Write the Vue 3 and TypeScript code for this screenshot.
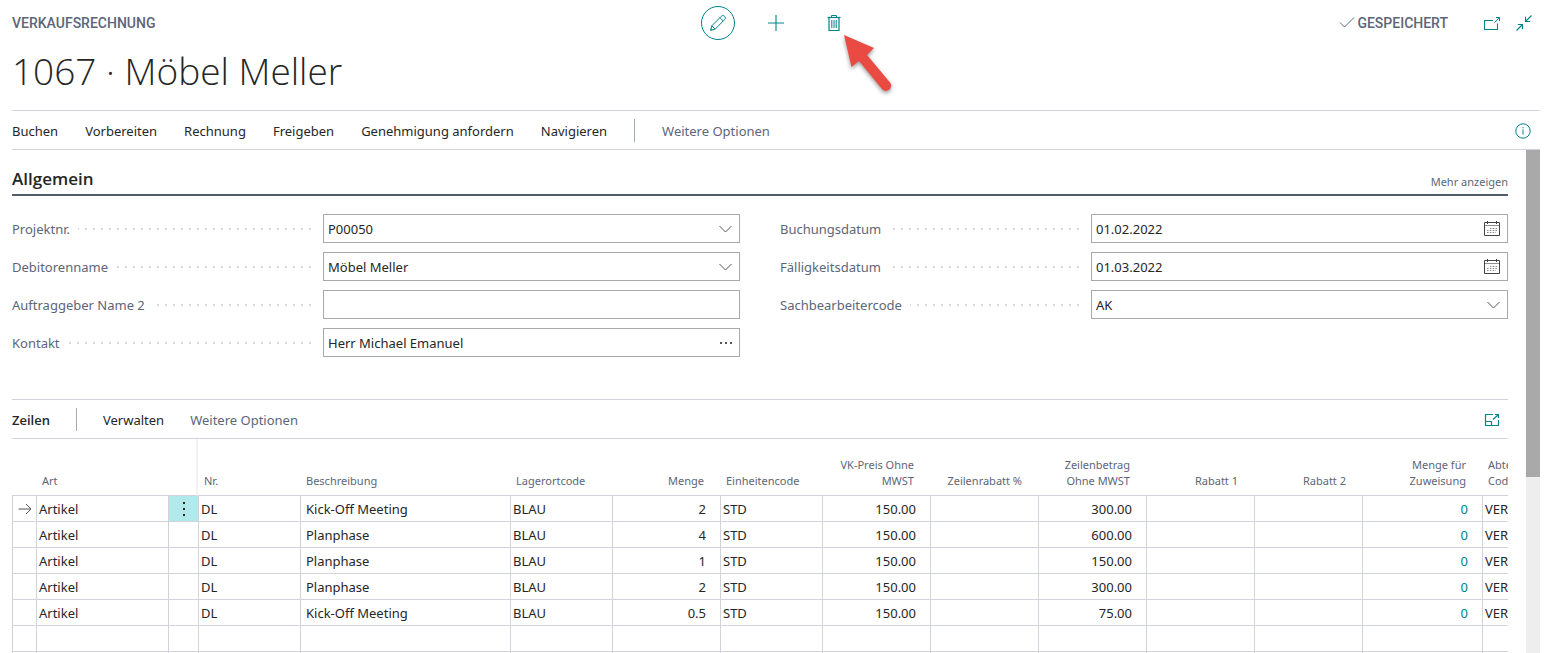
<script setup lang="ts">
interface Field {
  id: string
  label: string
  value: string
  kind: 'select' | 'text' | 'assist' | 'date'
}

interface Column {
  key: string
  label: string
  width: number
  numeric?: boolean
}

interface Line {
  art: string
  nr: string
  text: string
  location: string
  qty: string
  unit: string
  price: string
  amount: string
  assign: string
  dept: string
}

const menu: string[] = ['Buchen', 'Vorbereiten', 'Rechnung', 'Freigeben', 'Genehmigung anfordern', 'Navigieren']

const fieldColumns: Field[][] = [
  [
    { id: 'projekt', label: 'Projektnr.', value: 'P00050', kind: 'select' },
    { id: 'debitor', label: 'Debitorenname', value: 'Möbel Meller', kind: 'select' },
    { id: 'name2', label: 'Auftraggeber Name 2', value: '', kind: 'text' },
    { id: 'kontakt', label: 'Kontakt', value: 'Herr Michael Emanuel', kind: 'assist' },
  ],
  [
    { id: 'buchung', label: 'Buchungsdatum', value: '01.02.2022', kind: 'date' },
    { id: 'faellig', label: 'Fälligkeitsdatum', value: '01.03.2022', kind: 'date' },
    { id: 'bearbeiter', label: 'Sachbearbeitercode', value: 'AK', kind: 'select' },
  ],
]

const columns: Column[] = [
  { key: 'marker', label: '', width: 24 },
  { key: 'art', label: 'Art', width: 132 },
  { key: 'menu', label: '', width: 30 },
  { key: 'nr', label: 'Nr.', width: 102 },
  { key: 'text', label: 'Beschreibung', width: 210 },
  { key: 'location', label: 'Lagerortcode', width: 102 },
  { key: 'qty', label: 'Menge', width: 108, numeric: true },
  { key: 'unit', label: 'Einheitencode', width: 102 },
  { key: 'price', label: 'VK-Preis Ohne\nMWST', width: 108, numeric: true },
  { key: 'discount', label: 'Zeilenrabatt %', width: 108, numeric: true },
  { key: 'amount', label: 'Zeilenbetrag\nOhne MWST', width: 108, numeric: true },
  { key: 'rabatt1', label: 'Rabatt 1', width: 108, numeric: true },
  { key: 'rabatt2', label: 'Rabatt 2', width: 108, numeric: true },
  { key: 'assign', label: 'Menge für\nZuweisung', width: 120, numeric: true },
  { key: 'dept', label: 'Abteilung\nCode', width: 102 },
]

const tableWidth: number = columns.reduce((sum, c) => sum + c.width, 0)

const makeLine = (text: string, qty: string, amount: string): Line => ({
  art: 'Artikel',
  nr: 'DL',
  text,
  location: 'BLAU',
  qty,
  unit: 'STD',
  price: '150.00',
  amount,
  assign: '0',
  dept: 'VERK',
})

const lines: (Line | null)[] = [
  makeLine('Kick-Off Meeting', '2', '300.00'),
  makeLine('Planphase', '4', '600.00'),
  makeLine('Planphase', '1', '150.00'),
  makeLine('Planphase', '2', '300.00'),
  makeLine('Kick-Off Meeting', '0.5', '75.00'),
  null,
  null,
]

const cell = (line: Line | null, key: string): string =>
  line ? ((line as unknown as Record<string, string>)[key] ?? '') : ''
</script>

<template>
  <div class="page">
    <header class="top">
      <div class="caption">VERKAUFSRECHNUNG</div>
      <div class="actions">
        <button class="icon-btn round" type="button" aria-label="Bearbeiten">
          <svg width="18" height="18" viewBox="0 0 18 18" fill="none" stroke="currentColor">
            <path d="M1.500 16.500 L2.800 11.800 L12.300 2.300 C13.300 1.300 14.600 1.300 15.600 2.300 C16.600 3.300 16.600 4.600 15.600 5.600 L6.200 15.100 Z" />
            <path d="M2.800 11.800 L6.200 15.100 M11 3.700 L14.300 7 M2 14.600 L3.400 16" />
          </svg>
        </button>
        <button class="icon-btn" type="button" aria-label="Neu">
          <svg width="16" height="16" viewBox="0 0 16 16" fill="none" stroke="currentColor" stroke-width="1.100">
            <path d="M8 0 V16 M0 8 H16" />
          </svg>
        </button>
        <div class="delete">
          <button class="icon-btn" type="button" aria-label="Löschen">
            <svg width="14" height="16" viewBox="0 0 14 16" fill="none" stroke="currentColor">
              <path d="M0.500 2.500 H13.500" stroke-width="1.200" />
              <path d="M4.500 2.500 V0.500 H9.500 V2.500" />
              <path d="M2 2.500 V15.500 H12 V2.500" stroke-width="1.200" />
              <path d="M4.800 5 V13 M7 5 V13 M9.200 5 V13" />
            </svg>
          </button>
          <svg class="pointer" width="60" height="70" viewBox="0 0 60 70" aria-hidden="true">
            <path d="M4 5 L34 18 L27 25 L50 52.500 A5 5 0 0 1 42 59 L19 31 L11.500 37 Z" fill="#e94b43" />
          </svg>
        </div>
      </div>
      <div class="status">
        <span class="saved">
          <svg width="16" height="12" viewBox="0 0 16 12" fill="none" stroke="currentColor">
            <path d="M1 5.500 L5.500 10 L15 0.500" />
          </svg>
          GESPEICHERT
        </span>
        <button class="icon-btn small" type="button" aria-label="In neuem Fenster öffnen">
          <svg width="16" height="13" viewBox="0 0 16 13" fill="none" stroke="currentColor">
            <path d="M9 3.500 H0.500 V12.500 H13.500 V6.500" stroke-width="1.100" />
            <path d="M10.500 5.500 L15.500 0.700 M12 0.500 H15.500 V4.200" />
          </svg>
        </button>
        <button class="icon-btn small" type="button" aria-label="Verkleinern">
          <svg width="16" height="16" viewBox="0 0 16 16" fill="none" stroke="currentColor" stroke-width="1.100">
            <path d="M15.500 0.500 L9.500 6.500 M9.500 1.800 V6.500 H14.200" />
            <path d="M0.500 15.500 L6.500 9.500 M1.800 9.500 H6.500 V14.200" />
          </svg>
        </button>
      </div>
    </header>

    <h1 class="title">1067 · Möbel Meller</h1>

    <nav class="bar">
      <button v-for="item in menu" :key="item" class="link" type="button">{{ item }}</button>
      <span class="divider"></span>
      <button class="link muted" type="button">Weitere Optionen</button>
      <button class="icon-btn small info" type="button" aria-label="Infobox">
        <svg width="16" height="16" viewBox="0 0 16 16" fill="none" stroke="currentColor">
          <circle cx="8" cy="8" r="7.200" />
          <path d="M8 6.500 V11.500 M8 4.200 V5.400" />
        </svg>
      </button>
    </nav>

    <div class="body">
      <main class="content">
        <section>
          <div class="section-head">
            <h2>Allgemein</h2>
            <button class="more" type="button">Mehr anzeigen</button>
          </div>
          <div class="form">
            <div v-for="(column, i) in fieldColumns" :key="i" class="form-col">
              <div v-for="f in column" :key="f.id" class="field">
                <div class="label-cell">
                  <label :for="f.id">{{ f.label }}</label>
                  <span class="dots"></span>
                </div>
                <div class="control">
                  <template v-if="f.kind === 'select'">
                    <select :id="f.id">
                      <option>{{ f.value }}</option>
                    </select>
                    <svg class="chevron" width="13" height="8" viewBox="0 0 13 8" fill="none" stroke="currentColor">
                      <path d="M0.500 1 L6.500 7 L12.500 1" />
                    </svg>
                  </template>
                  <template v-else>
                    <input :id="f.id" type="text" :value="f.value" />
                    <button v-if="f.kind === 'assist'" class="assist" type="button" aria-label="Auswählen">
                      <svg width="12" height="2" viewBox="0 0 12 2" fill="#555">
                        <path d="M0 0 H2 V2 H0 Z M5 0 H7 V2 H5 Z M10 0 H12 V2 H10 Z" />
                      </svg>
                    </button>
                    <button v-if="f.kind === 'date'" class="assist" type="button" aria-label="Datum auswählen">
                      <svg width="16" height="15" viewBox="0 0 16 15" fill="none" stroke="#444">
                        <path d="M0.500 1.500 H15.500 V14.500 H0.500 Z" />
                        <path d="M3.500 0 V3 M12.500 0 V3" />
                        <path d="M1 4.500 H15" stroke="#8c8c8c" />
                        <path d="M6 7.500 H14 M3 9.500 H14 M3 11.500 H12" stroke="#888" stroke-dasharray="1.500 1.300" />
                      </svg>
                    </button>
                  </template>
                </div>
              </div>
            </div>
          </div>
        </section>

        <section class="lines">
          <div class="bar lines-bar">
            <h3>Zeilen</h3>
            <span class="divider"></span>
            <button class="link" type="button">Verwalten</button>
            <button class="link muted" type="button">Weitere Optionen</button>
            <button class="icon-btn small expand" type="button" aria-label="Fokusmodus">
              <svg width="16" height="14" viewBox="0 0 16 14" fill="none" stroke="currentColor" stroke-width="1.200">
                <path d="M9 1.500 H1.500 V12.500 H14.500 V7 M1.500 8.500 H7.500 V12.500" />
                <path d="M9 6.500 L14 2 M11 1.500 H14.500 V5" />
              </svg>
            </button>
          </div>
          <div class="grid">
            <table :style="{ width: tableWidth + 'px' }">
              <colgroup>
                <col v-for="c in columns" :key="c.key" :style="{ width: c.width + 'px' }" />
              </colgroup>
              <thead>
                <tr>
                  <th v-for="c in columns" :key="c.key" scope="col" :class="[c.key, { num: c.numeric }]">{{ c.label }}</th>
                </tr>
              </thead>
              <tbody>
                <tr v-for="(line, r) in lines" :key="r">
                  <td v-for="c in columns" :key="c.key" :class="[c.key, { num: c.numeric, active: r === 0 }]">
                    <svg v-if="c.key === 'marker' && r === 0" width="14" height="12" viewBox="0 0 14 12" fill="none" stroke="#555">
                      <path d="M0.500 6 H13 M8 1 L13 6 L8 11" />
                    </svg>
                    <button v-else-if="c.key === 'menu' && r === 0" class="row-menu" type="button" aria-label="Weitere Optionen anzeigen">
                      <svg width="2" height="14" viewBox="0 0 2 14" fill="currentColor">
                        <path d="M0 0 H2 V2 H0 Z M0 6 H2 V8 H0 Z M0 12 H2 V14 H0 Z" />
                      </svg>
                    </button>
                    <a v-else-if="c.key === 'assign' && line" href="#">{{ line.assign }}</a>
                    <template v-else>{{ cell(line, c.key) }}</template>
                  </td>
                </tr>
              </tbody>
            </table>
          </div>
        </section>
      </main>
      <div class="scroll-track"><div class="scroll-thumb"></div></div>
    </div>
  </div>
</template>

<style>
body {
  background: #fff;
}
</style>

<style scoped>
.page {
  box-sizing: border-box;
  height: 100vh;
  padding: 6px 5px 0 12px;
  display: flex;
  flex-direction: column;
  overflow: hidden;
  color: #262626;
  font: 13px/20px "Noto Sans", "Open Sans", sans-serif;
}
button {
  padding: 0;
  border: 0;
  background: none;
  color: inherit;
  font: inherit;
  white-space: nowrap;
}
svg {
  display: block;
}
.top {
  display: grid;
  grid-template-columns: 1fr auto 1fr;
  align-items: center;
}
.caption,
.saved {
  color: #5c6678;
  font: 500 14px/20px Roboto, sans-serif;
}
.actions {
  display: flex;
  gap: 24px;
}
.icon-btn {
  display: flex;
  align-items: center;
  justify-content: center;
  box-sizing: border-box;
  width: 34px;
  height: 34px;
  color: #00838a;
}
.round {
  border: 1px solid #00838a;
  border-radius: 50%;
}
.small {
  width: 16px;
  height: 20px;
}
.delete {
  position: relative;
}
.pointer {
  position: absolute;
  left: 23px;
  top: 24px;
  filter: drop-shadow(0 2px 2px rgba(0, 0, 0, 0.4));
}
.status {
  display: flex;
  justify-content: flex-end;
  align-items: center;
  gap: 16px;
  padding-right: 8px;
}
.saved {
  display: flex;
  align-items: center;
  gap: 2px;
  margin-right: 20px;
}
.title {
  margin: 5px 0 13px;
  font-family: "Open Sans", "Noto Sans", sans-serif;
  font-size: 37px;
  font-weight: 300;
  line-height: 52px;
}
.bar {
  display: flex;
  align-items: center;
  gap: 27px;
  box-sizing: border-box;
  height: 40px;
  flex: none;
  padding-top: 1px;
  border-top: 1px solid #d0d3d9;
  border-bottom: 1px solid #d0d3d9;
}
.lines-bar {
  gap: 26px;
}
.muted {
  color: #5c6678;
}
.divider {
  width: 1px;
  height: 23px;
  background: #a3abb9;
}
.info {
  margin: 0 9px 0 auto;
}
.body {
  display: flex;
  flex: 1;
  gap: 18px;
  min-height: 0;
}
.content {
  flex: 1;
  min-width: 0;
  overflow: hidden;
}
.scroll-track {
  width: 14px;
  background: #eee;
}
.scroll-thumb {
  height: 65%;
  background: #a9a9a9;
}
.section-head {
  display: flex;
  justify-content: space-between;
  align-items: flex-end;
  height: 44px;
  border-bottom: 2px solid #505c6d;
}
h2 {
  margin: 0 0 2px;
  font-family: "Open Sans", "Noto Sans", sans-serif;
  font-size: 17px;
  font-weight: 600;
  line-height: 26px;
}
.more {
  color: #5c6678;
  font-size: 11px;
  line-height: 16px;
  margin-bottom: 4px;
}
.form {
  display: grid;
  grid-template-columns: 1fr 1fr;
  gap: 40px;
  padding: 18px 0 42px;
}
.form-col {
  display: flex;
  flex-direction: column;
  gap: 9px;
}
.field {
  display: grid;
  grid-template-columns: 311fr 417fr;
  align-items: center;
}
.label-cell {
  display: flex;
  align-items: center;
  gap: 8px;
  padding-right: 12px;
  color: #5c6678;
}
.dots {
  flex: 1;
  height: 2px;
  background: repeating-linear-gradient(to left, #d9d9d9 0 2px, transparent 2px 8px);
}
.control {
  display: flex;
  align-items: center;
  box-sizing: border-box;
  height: 29px;
  border: 1px solid #a9a9a9;
  position: relative;
}
select,
input {
  appearance: none;
  flex: 1;
  min-width: 0;
  height: 100%;
  padding: 0 4px;
  border: 0;
  outline: 0;
  border-radius: 0;
  background: transparent;
  color: #262626;
  font: inherit;
}
.chevron {
  position: absolute;
  right: 7px;
  color: #555;
  pointer-events: none;
}
.assist {
  margin-right: 7px;
}
h3 {
  margin: 0;
  font-family: "Open Sans", "Noto Sans", sans-serif;
  font-size: 13px;
  font-weight: 600;
}
.expand {
  margin: 0 8px 0 auto;
}
.grid {
  overflow: hidden;
}
table {
  table-layout: fixed;
  border-collapse: separate;
  border-spacing: 0;
}
th {
  box-sizing: border-box;
  height: 57px;
  padding: 0 6px 6px;
  border-bottom: 1px solid #d0d3d9;
  color: #5c6678;
  font-size: 11px;
  font-weight: 400;
  line-height: 16px;
  text-align: left;
  vertical-align: bottom;
  white-space: pre-line;
}
th.num {
  padding: 0 16px 6px 4px;
  text-align: right;
}
th.menu {
  border-right: 2px solid #f3f3f4;
}
td {
  box-sizing: border-box;
  height: 26px;
  padding: 0 2px;
  border-left: 1px solid #d0d3d9;
  border-bottom: 1px solid #d0d3d9;
  line-height: 20px;
  white-space: nowrap;
}
td.text {
  padding-left: 5px;
}
td.num {
  padding-right: 14px;
  text-align: right;
}
td.marker {
  padding-left: 5px;
}
td.menu.active {
  padding: 0;
  background: #b2e9eb;
}
.row-menu {
  display: flex;
  align-items: center;
  justify-content: center;
  width: 100%;
  height: 25px;
}
a {
  color: #00838a;
  text-decoration: none;
}
</style>
